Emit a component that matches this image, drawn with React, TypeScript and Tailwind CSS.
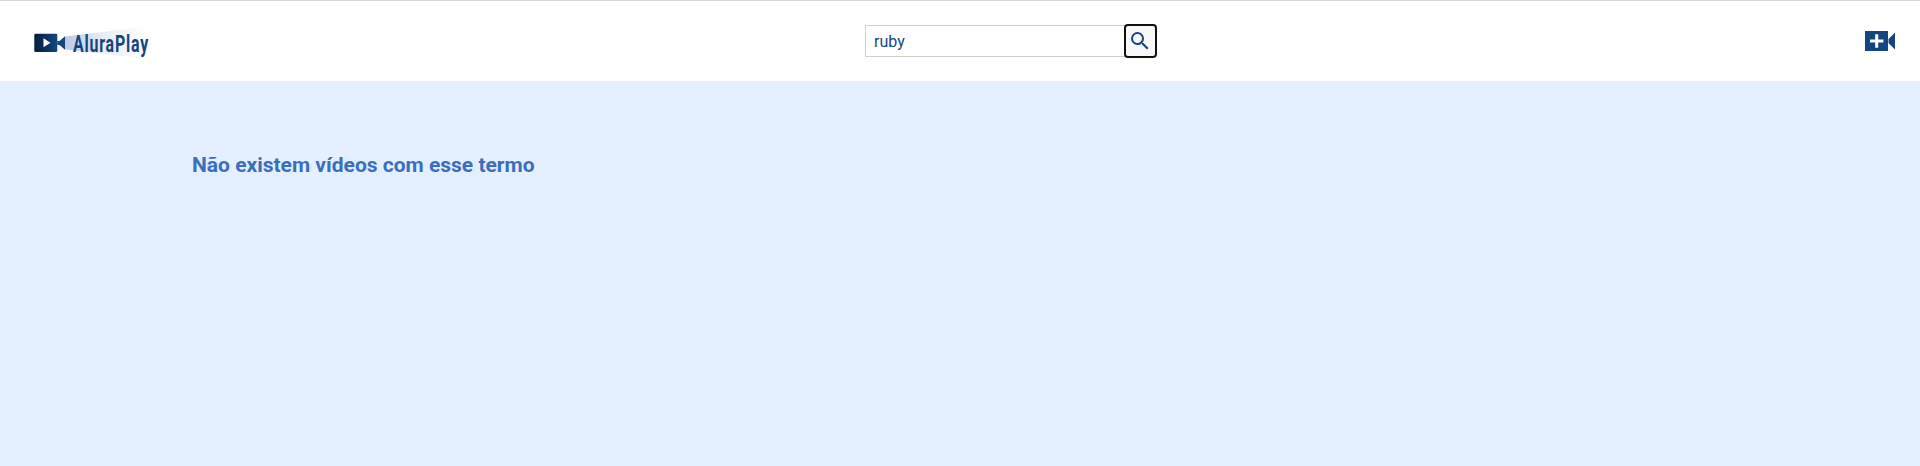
function Logo() {
  return (
    <svg className="h-10 w-[124px] overflow-visible" viewBox="0 0 124 40" role="img" aria-label="AluraPlay">
      <defs>
        <linearGradient id="body" x1="0" y1="0" x2="1" y2="0">
          <stop offset="0" stopColor="#051d3b" />
          <stop offset="1" stopColor="#154580" />
        </linearGradient>
        <linearGradient id="beam" x1="0" y1="0" x2="1" y2="0">
          <stop offset="0" stopColor="#b9cbe0" />
          <stop offset="0.45" stopColor="#e6edf5" />
          <stop offset="1" stopColor="#ffffff" />
        </linearGradient>
      </defs>
      <path d="M31 10.5 L114 0.5 V33 L31 23.5 Z" fill="url(#beam)" />
      <rect x="0.3" y="7.7" width="23" height="18.3" rx="1.3" fill="url(#body)" />
      <path d="M9.5 12.3 L16.5 16.8 L9.5 21.2 Z" fill="#fff" />
      <path d="M23.3 15 H25.5 L31 10.3 V23.7 L25.5 19 H23.3 Z" fill="#154580" />
      <text
        x="39"
        y="26"
        textLength="76"
        lengthAdjust="spacingAndGlyphs"
        fill="#154580"
        className="font-[Roboto,sans-serif] text-[24px] font-bold tracking-[1.2px]"
      >
        AluraPlay
      </text>
    </svg>
  );
}

export default function App() {
  return (
    <div className="flex min-h-screen flex-col bg-[#e4f0ff] font-[Roboto,sans-serif]">
      <header className="flex h-[81px] items-start border-t border-[#d7d7d7] bg-white pr-[25px] pl-[34px]">
        <a href="#" className="mt-[25px] block w-[124px]">
          <Logo />
        </a>
        <form className="mt-[23px] ml-[707px] flex w-[293px] items-center" onSubmit={(e) => e.preventDefault()}>
          <input
            className="h-8 w-[260px] border border-r-0 border-[#cfcfcf] bg-white px-2 text-base text-[#154580] outline-none"
            defaultValue="ruby"
            aria-label="Pesquisar"
          />
          <button
            className="-ml-px flex h-[34px] w-[33px] shrink-0 items-center justify-center rounded-[4px] border-2 border-[#101010] bg-[#f8f8f8]"
            aria-label="Buscar"
          >
            <svg className="-mt-px mr-[2px] size-6 shrink-0" viewBox="0 0 24 24" fill="#154580">
              <path d="M15.5 14h-.79l-.28-.27A6.471 6.471 0 0 0 16 9.5 6.5 6.5 0 1 0 9.5 16c1.61 0 3.09-.59 4.23-1.57l.27.28v.79l5 4.99L20.49 19l-4.99-5zm-6 0C7.01 14 5 11.99 5 9.5S7.01 5 9.5 5 14 7.01 14 9.5 11.99 14 9.5 14z" />
            </svg>
          </button>
        </form>
        <a href="#" className="mt-[30px] ml-auto block" aria-label="Enviar vídeo">
          <svg className="h-5 w-[30px]" viewBox="0 0 30 20" fill="#154580">
            <path d="M0 0H23V20H0Z M30 1.5V18.5L23.5 12V8Z" />
            <path d="M5 10H18.4 M11.7 3.3V16.7" stroke="#fff" strokeWidth="3" />
          </svg>
        </a>
      </header>
      <main className="px-48 pt-[70px]">
        <h1 className="text-[21px] leading-7 font-bold text-[#3a6fc0]">Não existem vídeos com esse termo</h1>
      </main>
    </div>
  );
}
